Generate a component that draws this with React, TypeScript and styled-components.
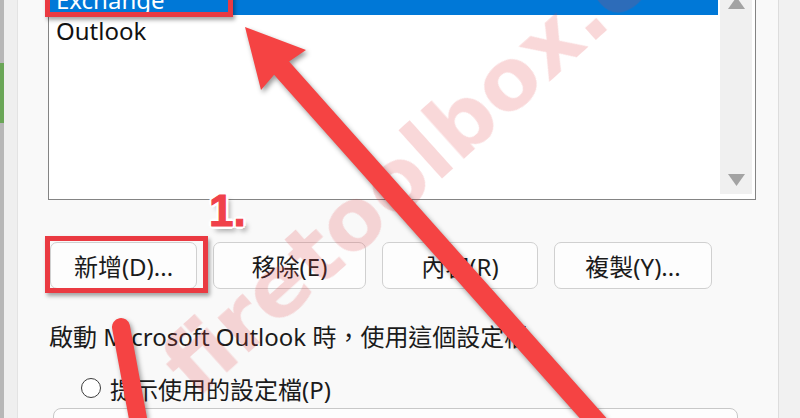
import React from "react";
import styled, { createGlobalStyle } from "styled-components";

const GlobalStyle = createGlobalStyle`
  html, body {
    margin: 0;
    padding: 0;
    width: 800px;
    height: 418px;
    overflow: hidden;
    background: #f9f9f9;
  }
  #root {
    width: 800px;
    height: 418px;
  }
`;

const Screen = styled.div`
  position: relative;
  display: flex;
  width: 800px;
  height: 418px;
  overflow: hidden;
  font-family: "Noto Sans", "Noto Sans CJK TC", sans-serif;
  color: #1b1b1b;
`;

/* window behind the dialog, left side */
const BackWindowEdge = styled.div`
  flex: none;
  width: 17px;
  display: flex;
  background: #efefef;
  border-right: 1px solid #e3e3e3;
`;

const EdgeStrip = styled.div`
  width: 4px;
  padding-top: 63px;
  background: #b7b7b7;
`;

const EdgeGreen = styled.div`
  height: 60px;
  background: #6aa657;
`;

const RightEdge = styled.div`
  flex: none;
  width: 21px;
  background: #f1f1f1;
  border-left: 1px solid #dddddd;
`;

const Dialog = styled.div`
  flex: 1;
  min-width: 0;
  display: flex;
  flex-direction: column;
  padding: 0 22px 0 30px;
  background: #f9f9f9;

  & > * {
    flex-shrink: 0;
  }
`;

/* profile list */
const ListBox = styled.div`
  box-sizing: border-box;
  display: flex;
  height: 217px;
  margin-top: -17px;
  padding: 0 3px 5px 0;
  border: 1px solid #848484;
  background: #ffffff;
`;

const Rows = styled.div`
  flex: 1;
  margin-right: 2px;
`;

const Row = styled.div<{ $selected?: boolean }>`
  height: 31px;
  padding-left: 7px;
  font-size: 24px;
  line-height: 31px;
  color: ${({ $selected }) => ($selected ? "#ffffff" : "#111111")};
  background: ${({ $selected }) => ($selected ? "#0078d7" : "transparent")};
`;

const ScrollBar = styled.div`
  flex: none;
  width: 32px;
  display: flex;
  flex-direction: column;
  justify-content: space-between;
  align-items: center;
  padding: 13px 0 8px;
  background: #f0f0f0;
`;

const ButtonRow = styled.div`
  display: flex;
  gap: 16px;
  margin-top: 42px;
  padding-left: 2px;
`;

const DialogButton = styled.button<{ $w: number }>`
  box-sizing: border-box;
  flex: none;
  width: ${({ $w }) => $w}px;
  height: 47px;
  padding: 0;
  border: 1px solid #d0d0d0;
  border-radius: 7px;
  background: #fdfdfd;
  font-family: inherit;
  font-size: 24px;
  color: #1b1b1b;
  text-align: center;
`;

const Prompt = styled.div`
  margin-top: 33px;
  padding-left: 1px;
  font-size: 24px;
  line-height: 30px;
  white-space: nowrap;
`;

const RadioRow = styled.label`
  display: flex;
  align-items: center;
  gap: 9px;
  height: 30px;
  margin-top: 21px;
  padding-left: 33px;
  font-size: 24px;
  white-space: nowrap;
`;

const RadioCircle = styled.span`
  box-sizing: border-box;
  flex: none;
  width: 20px;
  height: 20px;
  border: 1.5px solid #3c3c3c;
  border-radius: 50%;
  background: #ffffff;
`;

const ComboBox = styled.div`
  box-sizing: border-box;
  width: 685px;
  height: 44px;
  margin: 5px 0 0 5px;
  border: 1px solid #c8c8c8;
  border-radius: 8px;
  background: #fdfdfd;
`;

/* annotation layer */
const Overlay = styled.div`
  position: absolute;
  inset: 0;
  pointer-events: none;
`;

const Watermark = styled.span`
  position: absolute;
  left: 196px;
  top: 327px;
  font-family: "DejaVu Sans", sans-serif;
  font-weight: 700;
  font-size: 86px;
  line-height: 1;
  white-space: nowrap;
  color: rgba(225, 60, 66, 0.2);
  filter: blur(0.7px);
  transform-origin: 0 73px;
  transform: rotate(-42deg);
`;

const HighlightBox = styled.div<{ $x: number; $y: number; $w: number; $h: number }>`
  position: absolute;
  box-sizing: border-box;
  left: ${({ $x }) => $x}px;
  top: ${({ $y }) => $y}px;
  width: ${({ $w }) => $w}px;
  height: ${({ $h }) => $h}px;
  border: 5px solid #ea3a42;
  box-shadow: 2px 3px 4px rgba(0, 0, 0, 0.35);
`;

const StepLabel = styled.span`
  position: absolute;
  left: 209px;
  top: 189px;
  font-family: "Liberation Sans", Arial, sans-serif;
  font-weight: 700;
  font-size: 44px;
  line-height: 1;
  color: #f0414a;
  -webkit-text-stroke: 1px #f0414a;
  text-shadow:
    3px 0 0 #fff, -3px 0 0 #fff, 0 3px 0 #fff, 0 -3px 0 #fff,
    2px 2px 0 #fff, -2px 2px 0 #fff, 2px -2px 0 #fff, -2px -2px 0 #fff,
    4px 5px 5px rgba(0, 0, 0, 0.35);
`;

const ArrowLayer = styled.svg`
  position: absolute;
  inset: 0;
  filter: drop-shadow(2px 3px 2.5px rgba(0, 0, 0, 0.4));
`;

const arrowRed = "#f54343";

export default function App() {
  return (
    <>
      <GlobalStyle />
      <Screen>
        <BackWindowEdge>
          <EdgeStrip>
            <EdgeGreen />
          </EdgeStrip>
        </BackWindowEdge>

        <Dialog>
          <ListBox>
            <Rows>
              <Row $selected>Exchange</Row>
              <Row>Outlook</Row>
            </Rows>
            <ScrollBar>
              <svg width="17" height="12" viewBox="0 0 17 12">
                <polygon points="8.5,0 17,12 0,12" fill="#a3a3a3" />
              </svg>
              <svg width="17" height="12" viewBox="0 0 17 12">
                <polygon points="0,0 17,0 8.5,12" fill="#a3a3a3" />
              </svg>
            </ScrollBar>
          </ListBox>

          <ButtonRow>
            <DialogButton $w={147}>新增(D)...</DialogButton>
            <DialogButton $w={153}>移除(E)</DialogButton>
            <DialogButton $w={156}>內容(R)</DialogButton>
            <DialogButton $w={158}>複製(Y)...</DialogButton>
          </ButtonRow>

          <Prompt>啟動 Microsoft Outlook 時，使用這個設定檔</Prompt>

          <RadioRow>
            <RadioCircle />
            提示使用的設定檔(P)
          </RadioRow>

          <ComboBox />
        </Dialog>

        <RightEdge />

        <Overlay>
          <Watermark>firetoolbox.com</Watermark>
          <HighlightBox $x={45} $y={-20} $w={188} $h={37} />
          <HighlightBox $x={45} $y={236} $w={163} $h={57} />
          <ArrowLayer width="800" height="418" viewBox="0 0 800 418">
            <polygon
              points="245,27 306,50 289.1,61.5 651.5,468.6 636.5,481.9 274.1,74.8 261,90"
              fill={arrowRed}
            />
            <line
              x1="121"
              y1="327"
              x2="142"
              y2="440"
              stroke={arrowRed}
              strokeWidth="18"
              strokeLinecap="round"
            />
          </ArrowLayer>
          <StepLabel>1.</StepLabel>
        </Overlay>
      </Screen>
    </>
  );
}
